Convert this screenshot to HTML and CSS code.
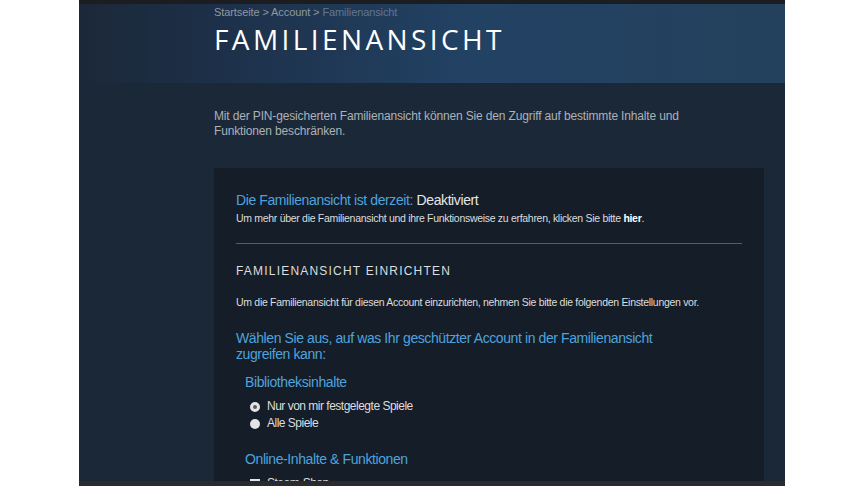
FILE: index.html
```html
<!DOCTYPE html>
<html lang="de">
<head>
    <meta charset="UTF-8">
    <title>Familienansicht</title>
    <link rel="stylesheet" href="styles.css">
</head>
<body>

    <div class="page">
        <div class="topbar"></div>

        <div class="page-head">
            <div class="head-inner">
                <div class="breadcrumbs">
                    <a href="#">Startseite</a> &gt; <a href="#">Account</a> &gt; <span class="current">Familienansicht</span>
                </div>
                <h1 class="page-title">Familienansicht</h1>
            </div>
        </div>

        <div class="page-body">
            <p class="intro">Mit der PIN-gesicherten Familienansicht können Sie den Zugriff auf bestimmte Inhalte und Funktionen beschränken.</p>

            <div class="settings-box">
                <div class="status">Die Familienansicht ist derzeit: <span class="status-value">Deaktiviert</span></div>
                <div class="small-note">Um mehr über die Familienansicht und ihre Funktionsweise zu erfahren, klicken Sie bitte <a href="#">hier</a>.</div>

                <hr class="divider">

                <h2 class="section-title">Familienansicht einrichten</h2>
                <div class="small-note">Um die Familienansicht für diesen Account einzurichten, nehmen Sie bitte die folgenden Einstellungen vor.</div>

                <h3 class="question">Wählen Sie aus, auf was Ihr geschützter Account in der Familienansicht zugreifen kann:</h3>

                <div class="option-group">
                    <h4 class="group-title">Bibliotheksinhalte</h4>
                    <label class="choice"><span class="radio checked"></span>Nur von mir festgelegte Spiele</label>
                    <label class="choice"><span class="radio"></span>Alle Spiele</label>
                </div>

                <div class="option-group">
                    <h4 class="group-title">Online-Inhalte &amp; Funktionen</h4>
                    <label class="choice"><span class="checkbox"></span>Steam-Shop</label>
                </div>
            </div>
        </div>

        <div class="bottombar"></div>
    </div>

</body>
</html>
```

FILE: styles.css
```css
/* === base === */
html, body {
    margin: 0;
    height: 100%;
    background: #ffffff;
}

body {
    font-family: "Liberation Sans", Arial, sans-serif;
}

.page {
    width: 706px;
    height: 486px;
    margin-left: 79px;
    display: flex;
    flex-direction: column;
    background: #1b2838;
    overflow: hidden;
}

.topbar {
    height: 4px;
    flex-shrink: 0;
    background: #1c1d20;
}

.bottombar {
    height: 5px;
    flex-shrink: 0;
    background: #2a2b2e;
}

/* === header band === */
.page-head {
    height: 79px;
    flex-shrink: 0;
    background: linear-gradient(90deg, #1b2838 0%, #1d3049 20%, #224264 55%, #24405c 100%);
}

.head-inner {
    padding-left: 135px;
}

.breadcrumbs {
    padding-top: 1px;
    font-size: 11px;
    line-height: 14px;
    letter-spacing: -0.1px;
    color: #8f98a0;
}

.breadcrumbs a {
    color: #8f98a0;
    text-decoration: none;
}

.breadcrumbs .current {
    color: #5f7890;
}

.page-title {
    margin: 2px 0 0;
    font-family: "Open Sans", sans-serif;
    font-weight: 400;
    font-size: 28px;
    line-height: 36px;
    letter-spacing: 3.4px;
    text-transform: uppercase;
    color: #ffffff;
}

/* === content === */
.page-body {
    flex: 1;
    min-height: 0;
    overflow: hidden;
    padding-left: 135px;
    padding-right: 21px;
}

.intro {
    max-width: 490px;
    margin: 26px 0 0;
    font-size: 12px;
    line-height: 15px;
    letter-spacing: -0.15px;
    color: #acb2b8;
}

.settings-box {
    margin-top: 29px;
    padding: 23px 22px 20px;
    background: #151d28;
    min-height: 400px;
}

.status {
    font-size: 14px;
    line-height: 18px;
    letter-spacing: -0.4px;
    color: #4fa3dc;
}

.status-value {
    color: #e6e6e6;
}

.small-note {
    margin-top: 2px;
    font-size: 10.5px;
    line-height: 14px;
    letter-spacing: -0.3px;
    color: #dcdedf;
}

.small-note a {
    color: #ffffff;
    font-weight: bold;
    text-decoration: none;
}

.divider {
    margin: 18px 0 0;
    border: 0;
    border-top: 1px solid #3b6582;
}

.section-title {
    margin: 19px 0 16px;
    font-size: 12px;
    line-height: 16px;
    font-weight: 400;
    letter-spacing: 1.2px;
    text-transform: uppercase;
    color: #dcdedf;
}

.question {
    max-width: 450px;
    margin: 21px 0 0;
    font-size: 14px;
    line-height: 16px;
    font-weight: 400;
    letter-spacing: -0.4px;
    color: #4fa3dc;
}

.option-group {
    padding-left: 9px;
}

.group-title {
    margin: 11px 0 7px;
    font-size: 14px;
    line-height: 18px;
    font-weight: 400;
    letter-spacing: -0.4px;
    color: #4fa3dc;
}

.option-group + .option-group .group-title {
    margin-top: 18px;
}

.choice {
    display: flex;
    align-items: center;
    gap: 7px;
    padding-left: 5px;
    font-size: 12px;
    line-height: 17px;
    letter-spacing: -0.5px;
    color: #dcdedf;
}

.radio {
    width: 10px;
    height: 10px;
    border-radius: 50%;
    background: #e4e4e4;
    box-sizing: border-box;
}

.radio.checked {
    border: 3px solid #e4e4e4;
    background: #5c5c5c;
}

.checkbox {
    width: 10px;
    height: 10px;
    background: #e4e4e4;
}
```
